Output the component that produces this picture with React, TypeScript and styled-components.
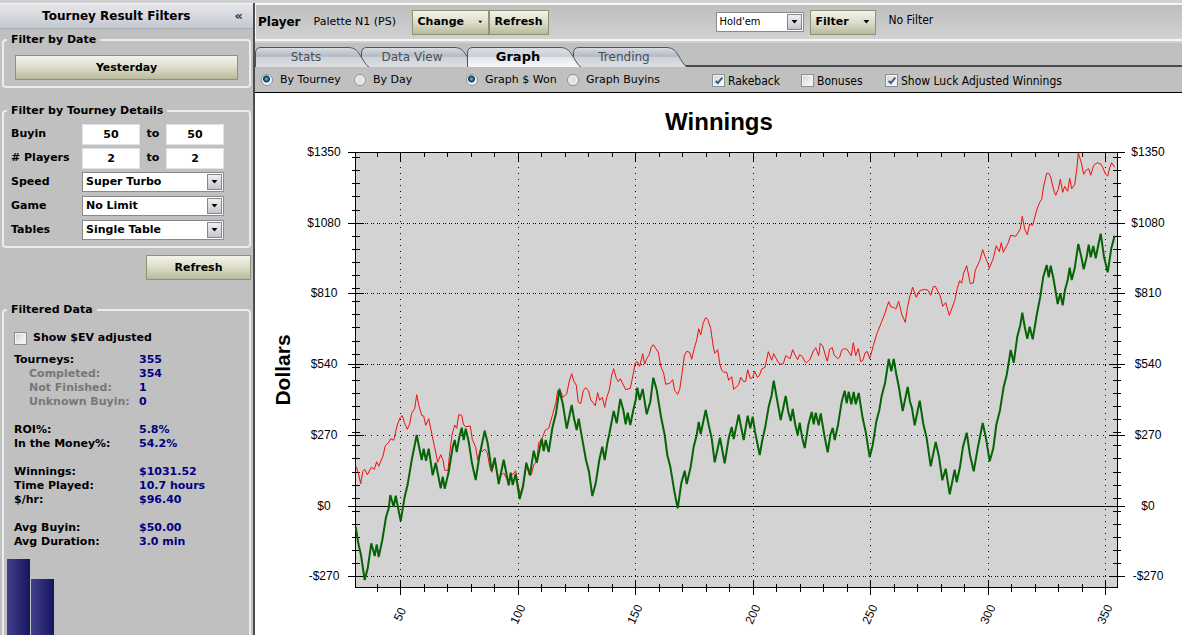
import React from "react";
import styled, { createGlobalStyle } from "styled-components";

const VERDANA = '"DejaVu Sans", Verdana, sans-serif';
const TAHOMA = '"DejaVu Sans Condensed", Tahoma, sans-serif';
const ARIAL = '"Liberation Sans", Arial, sans-serif';

const GlobalStyle = createGlobalStyle`
  *, *::before, *::after { box-sizing: border-box; }
  body { margin: 0; background: #c0c0c0; color: #000; font: 11px/14px ${VERDANA}; }
  button, input, select { font: inherit; color: inherit; margin: 0; }
`;

/* ---------- frame ---------- */

const App_ = styled.div`
  display: flex;
  flex-direction: column;
  height: 100vh;
  overflow: hidden;
`;

const TopStrip = styled.div`
  flex: none;
  height: 3px;
  background: #d0d0d0;
`;

const Columns = styled.div`
  flex: 1;
  min-height: 0;
  display: grid;
  grid-template-columns: 255px minmax(0, 1fr);
`;

/* ---------- sidebar ---------- */

const Sidebar = styled.aside`
  display: flex;
  flex-direction: column;
  min-height: 0;
  border-right: 2px solid #4c4c50;
  font-weight: bold;
`;

const SidebarHeader = styled.header`
  flex: none;
  display: flex;
  align-items: center;
  height: 26px;
  padding-right: 8px;
  border-top: 1px solid #f4f4f4;
  border-bottom: 1px solid #a9adb6;
  background: linear-gradient(#e6e7ea, #d5d8dd 50%, #c3c7cf);
`;

const SidebarTitle = styled.h1`
  flex: 1;
  margin: 0;
  text-align: center;
  font-size: 12px;
  line-height: 16px;
`;

const Collapse = styled.button`
  border: 0;
  padding: 0 2px;
  background: none;
  font-size: 13px;
  line-height: 16px;
  font-weight: bold;
  color: #333;
`;

const Group = styled.fieldset<{ $gap: number; $open?: boolean }>`
  flex: ${(p) => (p.$open ? "1 0 auto" : "none")};
  min-width: 0;
  margin: ${(p) => p.$gap}px 2px 0;
  padding: 0 3px;
  border: 2px solid #ececee;
  border-radius: 4px;
`;

const Legend = styled.legend`
  padding: 0 4px;
  line-height: 14px;
`;

const DateBody = styled.div`
  padding: 8px 8px 6px;
`;

const OliveButton = styled.button<{ $width?: string }>`
  display: inline-flex;
  align-items: center;
  justify-content: center;
  gap: 14px;
  width: ${(p) => p.$width ?? "auto"};
  height: 25px;
  padding: 0 5px;
  border: 1px solid #8f9175;
  background: linear-gradient(#f3f3ea, #dcdccb 50%, #b9ba9b);
  font-weight: bold;
  white-space: nowrap;
`;

const RightAligned = styled.div`
  flex: none;
  display: flex;
  justify-content: flex-end;
  padding: 7px 2px 0;
`;

const Details = styled.div`
  display: grid;
  grid-template-columns: 71px 58px 26px 58px;
  grid-auto-rows: 24px;
  align-items: center;
  padding: 4px;
`;

const To = styled.span`
  text-align: center;
`;

const NumberBox = styled.input`
  width: 100%;
  height: 21px;
  padding: 0;
  border: 1px solid #e2e2e4;
  background: #fff;
  text-align: center;
  font-weight: bold;
`;

const SelectWrap = styled.div<{ $wide?: boolean }>`
  position: relative;
  height: 20px;
  ${(p) => (p.$wide ? "grid-column: 2 / 5;" : "width: 88px;")}
`;

const SelectBox = styled.select<{ $plain?: boolean }>`
  appearance: none;
  display: block;
  width: 100%;
  height: 100%;
  padding: 0 18px 1px 3px;
  border: 1px solid #8a8a8a;
  border-radius: 0;
  background: #fff;
  font-weight: ${(p) => (p.$plain ? "normal" : "bold")};
  font-family: ${(p) => (p.$plain ? TAHOMA : VERDANA)};
`;

const SelectArrow = styled.span`
  position: absolute;
  top: 2px;
  right: 2px;
  bottom: 2px;
  width: 15px;
  display: flex;
  align-items: center;
  justify-content: center;
  border: 1px solid #84868c;
  background: linear-gradient(#f0f0f0, #dadce0 50%, #c2c5cb);
  pointer-events: none;
`;

const CheckInput = styled.input`
  appearance: none;
  flex: none;
  position: relative;
  width: 13px;
  height: 13px;
  border: 1px solid #8b8f96;
  background: linear-gradient(135deg, #cfd2d8, #f6f6f6 80%);
  box-shadow: inset 0 0 0 1px #f4f4f4;

  &:checked::after {
    content: "";
    position: absolute;
    left: 4px;
    top: 1px;
    width: 4px;
    height: 8px;
    border: solid #3d5f7d;
    border-width: 0 2px 2px 0;
    transform: rotate(40deg);
  }
`;

const RadioInput = styled.input`
  appearance: none;
  flex: none;
  width: 12px;
  height: 12px;
  border: 1px solid #8e9298;
  border-radius: 50%;
  background: radial-gradient(#d8dadd, #fafafa);

  &:checked {
    background: radial-gradient(circle at 45% 40%, #7fc4e6 0, #1b5f8c 2px, #0e3350 3px, #f2f5f7 4px);
  }
`;

const FilteredBody = styled.div`
  display: flex;
  flex-direction: column;
  gap: 8px;
  padding: 14px 7px 0;
`;

const CheckLabel = styled.label`
  display: flex;
  align-items: center;
  gap: 6px;
`;

const StatGroups = styled.div`
  display: flex;
  flex-direction: column;
  gap: 14px;
`;

const StatList = styled.dl`
  display: grid;
  grid-template-columns: 125px 1fr;
  grid-auto-rows: 14px;
  margin: 0;
`;

const StatName = styled.dt<{ $sub?: boolean }>`
  padding-left: ${(p) => (p.$sub ? 15 : 0)}px;
  color: ${(p) => (p.$sub ? "#777" : "#000")};
  white-space: nowrap;
`;

const StatValue = styled.dd`
  margin: 0;
  color: #000080;
`;

const Histogram = styled.div`
  display: flex;
  align-items: flex-end;
  gap: 1px;
  height: 130px;
  margin-top: 10px;
`;

const Bar = styled.div`
  width: 23px;
  background: linear-gradient(90deg, #443f8c, #17155f);
`;

/* ---------- main area ---------- */

const Main = styled.main`
  display: flex;
  flex-direction: column;
  min-width: 0;
`;

const Toolbar = styled.div`
  flex: none;
  display: flex;
  align-items: center;
  height: 38px;
  padding-left: 2px;
  border: solid #f6f6f6;
  border-width: 2px 0 2px 1px;
  background: linear-gradient(#bebebe, #d2d2d2);
`;

const PlayerTitle = styled.h2`
  margin: 0 13px 0 0;
  font-size: 12px;
  line-height: 16px;
`;

const PlayerName = styled.span`
  width: 98px;
`;

const FilterControls = styled.div`
  display: flex;
  align-items: center;
  gap: 6px;
  margin-left: 167px;
`;

const FilterState = styled.span`
  padding: 0 0 4px 7px;
  font: 12px/14px ${TAHOMA};
`;

const TabBar = styled.div`
  flex: none;
  display: flex;
  height: 26px;
  padding-top: 4px;
  border-top: 2px solid #d0d0d0;
  border-bottom: 2px solid #4a4a4a;
  isolation: isolate;
`;

const Tab = styled.button<{ $active?: boolean; $level: number }>`
  position: relative;
  z-index: ${(p) => p.$level};
  width: 106px;
  height: 20px;
  padding: 0 4px 1px 0;
  border: 0;
  background: none;
  font-size: ${(p) => (p.$active ? 13 : 12)}px;
  line-height: 16px;
  font-weight: ${(p) => (p.$active ? "bold" : "normal")};
  color: ${(p) => (p.$active ? "#000" : "#4a4f57")};
`;

const TabShape = styled.svg`
  position: absolute;
  left: 0;
  top: 0;
  z-index: -1;
`;

const OptionBar = styled.form`
  flex: none;
  display: grid;
  grid-template-columns: 93px 112px 101px 145px 89px 84px 1fr;
  align-items: center;
  height: 26px;
  padding-left: 6px;
  border-bottom: 1px solid #000;
`;

const RadioLabel = styled.label`
  display: flex;
  align-items: center;
  gap: 7px;
  white-space: nowrap;
`;

const OptionCheck = styled.label`
  display: flex;
  align-items: center;
  gap: 3px;
  padding-top: 2px;
  white-space: nowrap;
  font: 12px/14px ${TAHOMA};
`;

const ChartPanel = styled.section`
  flex: 1;
  min-height: 0;
  background: #fff;
`;

const ChartSvg = styled.svg`
  display: block;
  width: 100%;
  height: auto;
  font-family: ${ARIAL};
`;

/* ---------- data ---------- */

const STATS: { name: string; value: string; sub?: boolean }[][] = [
  [
    { name: "Tourneys:", value: "355" },
    { name: "Completed:", value: "354", sub: true },
    { name: "Not Finished:", value: "1", sub: true },
    { name: "Unknown Buyin:", value: "0", sub: true },
  ],
  [
    { name: "ROI%:", value: "5.8%" },
    { name: "In the Money%:", value: "54.2%" },
  ],
  [
    { name: "Winnings:", value: "$1031.52" },
    { name: "Time Played:", value: "10.7 hours" },
    { name: "$/hr:", value: "$96.40" },
  ],
  [
    { name: "Avg Buyin:", value: "$50.00" },
    { name: "Avg Duration:", value: "3.0 min" },
  ],
];

const FINISHES = [130, 110];

const WON = `355.7,526.7 358.3,543.3 361,555 364.7,580 367.7,568.3 371.3,543.3 374.7,556 376.7,544.3 378.7,557
382.3,540 386,517.3 388.7,508.3 390.3,495 393.7,506.7 395.7,495.7 400.7,521 404.7,496.7 407.7,484.3 411.7,460
416.7,435 421.7,460 423.7,448.7 426,460.7 428.7,448.7 432.7,475.3 435.7,462.7 440.7,488.3 442.7,476.7
444.7,488.7 448.7,471.7 452.7,447.3 454.7,440 456.7,452 459.3,437.3 461.7,427.7 463.7,440 465.7,428.7
468.7,441.7 472,463.3 475.7,480 479.3,456.7 484.7,430.7 487.7,443.3 491.7,470.7 494.7,457.7 498.7,484
503.7,459.7 508.7,485.3 510.7,472.7 512.7,485 515.7,474 519.7,499 523,486.7 526.3,462.7 530,475 533.7,450.7
536.7,462.7 541.7,438.7 543.7,451 545.7,440 548.7,452 552.3,428.3 556,413.3 559.3,390 562.7,403.3
566.7,428.7 571.7,405 574,418.3 576.7,430 578.7,418.7 582.7,441.7 586,460 589,471.7 592.3,496 595.7,483.3
599.3,460 602.3,446.7 604.7,460 607.3,443.3 609.3,434 613.7,411 616.7,423.3 620.3,399 623.3,410 625.7,424.3
627.7,412.7 630.3,425 633.3,410 635.7,400 637.3,387.7 639.7,400 642.7,389 646.7,414.3 650.3,401.7
653.3,377.7 656.7,390 661,416.7 664.7,435 667.3,455 670.3,466.7 674.7,493.3 677.7,508.3 681.3,483.3
684.7,470.7 686.7,484 690.7,466.7 693.7,446.7 696.7,435 698.7,422 700.7,434 705.7,410 708.7,425 711.7,438.3
714.7,462.3 720,437.7 724.7,463.3 728.7,438.3 731.7,427 733.7,439 738.7,414.7 741,426.7 743.7,440
747.7,415.7 750.3,428.3 752.7,416.7 755,431.7 759.7,455 762.3,440 765,428.3 768.7,406.7 771.7,395
773.7,380.7 776.7,397.7 780.7,420 785.7,396 788.3,411.7 790.7,421 792.7,409 795.3,425 797.7,435 799.7,422.7
802.3,438.3 804.7,448 808.3,425 811.7,412 813.7,424.3 815.7,412.7 818.7,425.3 820.7,413.3 824.3,435
827.7,452.3 830.3,435 832.7,428 834.7,440 838,425 841.7,401.7 844.7,390.7 846.7,403.3 848.7,391.7
851.3,404.3 853.7,392 855.7,404.3 858.7,393 862.7,418.3 865.7,431.7 869.7,457.3 872.7,445 876.3,421.7
879.3,410 881.7,395.7 885,383.3 888.7,359 891.3,371.3 893.7,359 896.3,374.3 898.7,386 902.7,411 907.7,387
910,401.7 912,408.3 914.7,425.3 919.7,400.7 923.3,424 926.7,438.3 930.7,466.3 935.7,442 939,456.7
942.3,480.3 945.7,468.7 949.7,494.3 954.7,469.7 956.7,482.3 960,466.7 963,446.7 966.7,432.7 970,455
973.7,471.3 978,446.7 982.7,423 986,438.3 989.7,461.3 993.3,448.3 996.3,425 1000,410 1003.7,386.7
1006.7,375 1010.7,350 1013.7,362.7 1017.3,336.7 1020.3,325 1022.3,312.7 1024.7,326.7 1027.3,338.7
1029.7,326.7 1032.7,339.3 1036.7,315 1040.3,296.7 1043.3,276.7 1046.7,265 1048.7,277.3 1050.7,265.7
1053.7,280 1057.7,304 1060.3,293.3 1062.7,305.3 1065,290 1067.7,280 1069.7,267.7 1071.7,280 1074.7,268.3
1078.3,244 1081.3,256.7 1083.7,269.3 1086.7,256.7 1088.7,244.7 1090.7,257.3 1093.3,246 1095.7,258.3
1098.3,245 1100.7,233.7 1104,256.7 1107.7,272.3 1111.3,248.3 1114.7,235.7`;

const LUCK_ADJUSTED = `355.7,466 358,471.7 360.7,483.7 362.7,471.7 364.7,469.3 367.3,474.7 371.3,467.3 374.3,469.3
376.7,461.7 378.7,466.3 383,456 385.3,445.7 388.7,442.3 390.7,438.7 393.7,440.3 397.3,425 400.3,417.3
402.3,415.7 404.3,422.3 407.3,429.3 409.7,424 411.7,413.3 414.7,408.7 416.7,394.7 419,406 421.7,415.3
423.7,416 425.7,425.3 428.7,418.7 431.7,433.3 434.7,447.7 437.7,462.3 440.7,454.7 443,460 444.7,470.3
448,470.3 449.3,456.7 452,435 454.7,425 456.7,428.3 458.7,414.7 461.7,415.3 463.3,424 465.3,426.7 470.3,426
472.3,439.3 475.7,447.3 477.7,460.3 480,450.7 482.7,451.3 484.7,449 487.3,452.7 489.7,466.7 491.7,472.3
494.7,461.7 498.7,479.3 501.3,475 503.7,473 506.7,478.3 508.7,484.7 510.7,475 513.3,474 515.7,470.7 518,485
520.3,494 523.3,483.3 526.7,465 529.3,475.3 531.3,474.7 533.7,465 536.7,461.7 538.7,442.7 541.7,439.3
545.3,430 548.7,428.3 552.7,414.3 555.7,403.3 557.7,390.7 559.7,388.3 562.7,397.3 566.7,394 569.3,381
571.7,373.7 573.7,380.7 576.3,385.3 578.3,402.3 580.7,403.7 583.3,390.7 585.7,387.7 588.7,391.3 590.7,399.7
595.3,405.7 597.7,392.7 599.7,400.3 602.3,397.3 604.7,407.3 606.7,397.7 609.3,390 611.7,375 613.7,368.7
616.3,378.3 618.3,381.7 620.3,378.7 625.7,389.7 630.3,388.3 633,375 635.3,362.7 637.3,361.7 639.7,366.3
642.7,353.7 644.7,364 646.7,358.7 649.3,354.3 651.3,347 653.3,344.7 658.3,352.3 660.7,366 663.7,373.3
665.7,384.3 669.7,383.3 672.7,379.7 674.7,390.7 677.7,394.3 679.7,389.3 682.3,371.7 684.3,355.7 686.7,351.3
689.7,352.3 691.7,359.3 694.3,348.3 696.7,340 698.7,328.7 700.7,335 703.3,322.7 705.7,317.7 707.7,319.3
710.7,328.3 713,345 714.7,353.3 717.7,349.7 719.7,363.3 721.7,370.3 723.7,372 726.7,372.3 728.7,380.3
731.7,376.7 733.7,389.3 738.7,384.7 740.7,377.3 743.7,381.7 745.7,381.3 747.7,369.7 750.3,378.7 752.7,377.3
754.7,371.3 757.3,377.3 759.3,375.7 761.7,369 765,367.3 768.3,351.7 771.7,360.3 773.7,353.7 778,362
780.7,364.3 783.3,363.7 785.7,355.7 790,358.7 792.7,349.7 795,355 797.7,359.7 799.7,354.7 802.3,356.3
804.7,361.3 806.7,362.7 810.3,359 813.3,351 815.7,347.7 818.7,355.7 820.3,343.3 822.7,345.7 825.3,355
827.3,361.3 829.7,349 832.3,347.7 834.3,355.3 838,358.7 839.7,357 841.7,350.3 844.3,348.7 846.7,349
851.3,355.7 853.3,342.7 855.7,355.7 858.3,348.7 860.7,361.7 862.7,360.7 865.3,352.3 867.3,351.7 869.7,358.7
873.3,345.7 876.7,334.3 881,323.3 884.7,314 888.7,301.7 891,307 893.7,307.3 895.7,309.3 898.7,301.3
901.7,314 905.3,322.3 907.3,308.3 910,295.7 912.7,287.3 916.3,297.3 919.3,291 924.3,289.3 928,290.3
930.7,295.3 933.3,286.7 935.3,286.3 940.3,296 942.7,306.3 945.7,302.7 949.3,315.3 954.7,300.7 957.3,288.3
959.7,280.7 961.7,283.3 963.7,273 966.7,265.7 970.3,283.7 973.3,283 975.3,270.3 979.7,260.7 982.7,249.7
985,256.7 987.7,262.7 989.3,268.3 993.3,258.3 996.3,245.7 999.3,251.7 1001.3,242.7 1003.3,252.3
1008.3,242.7 1010.7,235.3 1015.7,236.3 1020.3,229 1022.3,216.3 1024.7,229 1027.3,234.7 1029.7,224
1032.7,225.3 1036.7,210 1039.7,202.3 1041.7,199.3 1043.7,186 1046.7,173.3 1048.7,173.3 1050.7,177
1053.7,190 1055.7,195.3 1058.3,189.3 1060.3,179.3 1062.7,192.3 1064.7,186.3 1067.7,191.3 1069.7,178.3
1071.7,188.7 1074.7,184.7 1076.7,170 1078.3,153 1081.3,162.7 1083.7,174.3 1086.3,170 1088.7,168.7
1090.7,175.3 1093.7,165.3 1097.3,162.7 1100.7,164 1102.7,167.3 1105.3,173.7 1107.7,176 1109.7,167.7
1111.7,162.7 1114.7,167.3`;

/* ---------- chart ---------- */

const PLOT = { left: 355, right: 1117, top: 152, bottom: 587 };

const px = (tourney: number) => Math.round(400 + (tourney - 50) * 2.35) + 0.5;
const py = (dollars: number) => Math.round(505.6 - dollars * 0.262) + 0.5;
const range = (from: number, to: number, step: number) =>
  Array.from({ length: Math.floor((to - from) / step) + 1 }, (_, i) => from + i * step);

const X_MAJOR = range(50, 350, 50);
const X_MINOR = range(40, 350, 10);
const Y_MAJOR = range(-270, 1350, 270);
const Y_MINOR = range(-220, 1330, 50);

const dollarLabel = (v: number) => (v < 0 ? `-$${-v}` : `$${v}`);

function WinningsChart() {
  return (
    <ChartSvg viewBox="255 93 927 542" role="img" aria-label="Winnings">
      <text x="719" y="130" textAnchor="middle" fontSize="24" fontWeight="bold">
        Winnings
      </text>
      <text transform="translate(290 370) rotate(-90)" textAnchor="middle" fontSize="21" fontWeight="bold">
        Dollars
      </text>
      <rect
        x={PLOT.left + 0.5}
        y={PLOT.top + 0.5}
        width={PLOT.right - PLOT.left}
        height={PLOT.bottom - PLOT.top}
        fill="#d3d3d3"
        stroke="#000"
      />
      <g stroke="#000" fill="none">
        {X_MAJOR.map((v) => (
          <g key={v}>
            <path d={`M${px(v)} 161V580`} strokeDasharray="1 5" />
            <path d={`M${px(v)} 152V161M${px(v)} 580V595`} />
          </g>
        ))}
        {X_MINOR.map((v) => (
          <path key={v} d={`M${px(v)} 152V157M${px(v)} 584V592`} />
        ))}
        {Y_MAJOR.map((v) => (
          <g key={v}>
            {v === 0 ? (
              <path d={`M348 ${py(v)}H1125`} />
            ) : (
              <>
                {v !== 1350 && (
                  <path d={`M365 ${py(v)}H1109`} strokeDasharray={v === 270 ? "1 5" : "1 1 1 3"} />
                )}
                <path d={v === 1350 ? `M348 ${py(v)}H1125` : `M348 ${py(v)}H364M1109 ${py(v)}H1125`} />
              </>
            )}
          </g>
        ))}
        {Y_MINOR.map((v) => (
          <path key={v} d={`M352 ${py(v)}H360M1113 ${py(v)}H1121`} />
        ))}
      </g>
      <polyline points={LUCK_ADJUSTED} fill="none" stroke="#f00f0f" strokeWidth="1" />
      <polyline points={WON} fill="none" stroke="#066406" strokeWidth="2" />
      <g fontSize="12" textAnchor="middle">
        {Y_MAJOR.map((v) => (
          <g key={v}>
            <text x="324" y={py(v) + 3.5}>
              {dollarLabel(v)}
            </text>
            <text x="1148" y={py(v) + 3.5}>
              {dollarLabel(v)}
            </text>
          </g>
        ))}
        {X_MAJOR.map((v) => (
          <text key={v} transform={`translate(${px(v) + 3} 616) rotate(-65)`}>
            {v}
          </text>
        ))}
      </g>
    </ChartSvg>
  );
}

/* ---------- parts ---------- */

const DownTriangle = () => (
  <svg width="7" height="4" viewBox="0 0 7 4" aria-hidden="true">
    <path d="M0.5 0H6.5L3.5 3.6Z" fill="#000" />
  </svg>
);

function Dropdown({ id, value, wide, plain }: { id: string; value: string; wide?: boolean; plain?: boolean }) {
  return (
    <SelectWrap $wide={wide}>
      <SelectBox id={id} $plain={plain} aria-label={plain ? "Game type" : undefined}>
        <option>{value}</option>
      </SelectBox>
      <SelectArrow>
        <DownTriangle />
      </SelectArrow>
    </SelectWrap>
  );
}

const TABS = [
  { name: "Stats", level: 3 },
  { name: "Data View", level: 2 },
  { name: "Graph", level: 4, active: true },
  { name: "Trending", level: 1 },
];

function TabItem({ name, level, active }: { name: string; level: number; active?: boolean }) {
  const fill = `tab-fill-${level}`;
  return (
    <Tab type="button" role="tab" aria-selected={!!active} $active={active} $level={level}>
      <TabShape width="118" height="20" viewBox="0 0 118 20" aria-hidden="true">
        <defs>
          <linearGradient id={fill} x1="0" y1="0" x2="0" y2="1">
            <stop offset="0" stopColor="#dcdfe3" />
            <stop offset="0.25" stopColor={active ? "#d3d8df" : "#c3c9d1"} />
            <stop offset="0.45" stopColor={active ? "#c8ced7" : "#b1bac5"} />
            <stop offset="0.5" stopColor={active ? "#e3e6ea" : "#cdd2d8"} />
            <stop offset="1" stopColor={active ? "#f8f8f9" : "#dddfe2"} />
          </linearGradient>
        </defs>
        <path
          d="M0.5 20V6Q0.5 0.5 6 0.5H93C99 0.5 102 3 105 8L110 16Q112 19 114 20Z"
          fill={`url(#${fill})`}
        />
        <path
          d="M0.5 20V6Q0.5 0.5 6 0.5H93C99 0.5 102 3 105 8L110 16Q112 19 114 20"
          fill="none"
          stroke="#50545a"
        />
      </TabShape>
      {name}
    </Tab>
  );
}

function FiltersSidebar() {
  return (
    <Sidebar>
      <SidebarHeader>
        <SidebarTitle>Tourney Result Filters</SidebarTitle>
        <Collapse type="button" aria-label="Collapse">
          «
        </Collapse>
      </SidebarHeader>

      <Group $gap={4}>
        <Legend>Filter by Date</Legend>
        <DateBody>
          <OliveButton type="button" $width="100%">
            Yesterday
          </OliveButton>
        </DateBody>
      </Group>

      <Group $gap={16}>
        <Legend>Filter by Tourney Details</Legend>
        <Details>
          <label htmlFor="buyin-from">Buyin</label>
          <NumberBox id="buyin-from" defaultValue="50" />
          <To>to</To>
          <NumberBox aria-label="Buyin to" defaultValue="50" />
          <label htmlFor="players-from"># Players</label>
          <NumberBox id="players-from" defaultValue="2" />
          <To>to</To>
          <NumberBox aria-label="Players to" defaultValue="2" />
          <label htmlFor="speed">Speed</label>
          <Dropdown id="speed" value="Super Turbo" wide />
          <label htmlFor="game">Game</label>
          <Dropdown id="game" value="No Limit" wide />
          <label htmlFor="tables">Tables</label>
          <Dropdown id="tables" value="Single Table" wide />
        </Details>
      </Group>

      <RightAligned>
        <OliveButton type="button" $width="105px">
          Refresh
        </OliveButton>
      </RightAligned>

      <Group $gap={23} $open>
        <Legend>Filtered Data</Legend>
        <FilteredBody>
          <CheckLabel>
            <CheckInput type="checkbox" />
            Show $EV adjusted
          </CheckLabel>
          <StatGroups>
            {STATS.map((rows) => (
              <StatList key={rows[0].name}>
                {rows.map((r) => (
                  <React.Fragment key={r.name}>
                    <StatName $sub={r.sub}>{r.name}</StatName>
                    <StatValue>{r.value}</StatValue>
                  </React.Fragment>
                ))}
              </StatList>
            ))}
          </StatGroups>
        </FilteredBody>
        <Histogram>
          {FINISHES.map((h) => (
            <Bar key={h} style={{ height: h }} />
          ))}
        </Histogram>
      </Group>
    </Sidebar>
  );
}

export default function App() {
  return (
    <App_>
      <GlobalStyle />
      <TopStrip />
      <Columns>
        <FiltersSidebar />
        <Main>
          <Toolbar>
            <PlayerTitle>Player</PlayerTitle>
            <PlayerName>Palette N1 (PS)</PlayerName>
            <OliveButton type="button" $width="77px">
              Change <DownTriangle />
            </OliveButton>
            <OliveButton type="button" $width="60px">
              Refresh
            </OliveButton>
            <FilterControls>
              <Dropdown id="game-type" value="Hold'em" plain />
              <OliveButton type="button" $width="66px">
                Filter <DownTriangle />
              </OliveButton>
              <FilterState>No Filter</FilterState>
            </FilterControls>
          </Toolbar>
          <TabBar role="tablist">
            {TABS.map((t) => (
              <TabItem key={t.name} {...t} />
            ))}
          </TabBar>
          <OptionBar>
            <RadioLabel>
              <RadioInput type="radio" name="axis" defaultChecked />
              By Tourney
            </RadioLabel>
            <RadioLabel>
              <RadioInput type="radio" name="axis" />
              By Day
            </RadioLabel>
            <RadioLabel>
              <RadioInput type="radio" name="measure" defaultChecked />
              Graph $ Won
            </RadioLabel>
            <RadioLabel>
              <RadioInput type="radio" name="measure" />
              Graph Buyins
            </RadioLabel>
            <OptionCheck>
              <CheckInput type="checkbox" defaultChecked />
              Rakeback
            </OptionCheck>
            <OptionCheck>
              <CheckInput type="checkbox" />
              Bonuses
            </OptionCheck>
            <OptionCheck>
              <CheckInput type="checkbox" defaultChecked />
              Show Luck Adjusted Winnings
            </OptionCheck>
          </OptionBar>
          <ChartPanel>
            <WinningsChart />
          </ChartPanel>
        </Main>
      </Columns>
    </App_>
  );
}
